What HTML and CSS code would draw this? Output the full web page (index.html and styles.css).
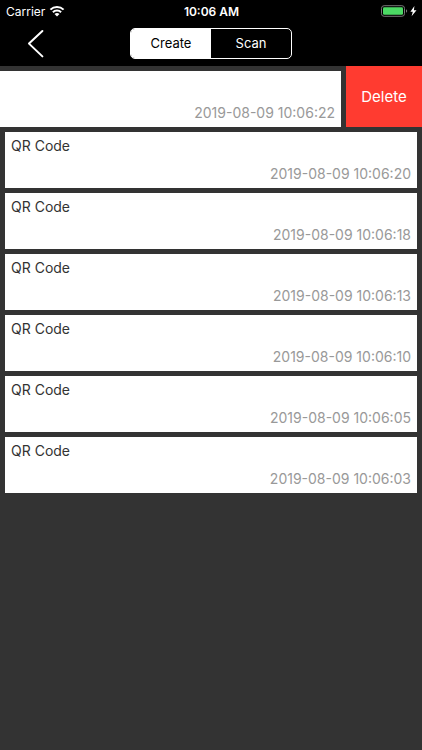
FILE: index.html
```html
<!DOCTYPE html>
<html lang="en">
<head>
<meta charset="utf-8">
<meta name="viewport" content="width=device-width, initial-scale=1">
<title>History</title>
<link rel="stylesheet" href="styles.css">
</head>
<body>
<header class="header">
  <div class="status">
    <div class="carrier">
      <span>Carrier</span>
      <svg class="wifi" viewBox="0 0 16 12" width="16" height="12" aria-hidden="true">
        <path d="M1.4 4.6a9.4 9.4 0 0 1 13.2 0M3.9 7.2a5.8 5.8 0 0 1 8.2 0" fill="none" stroke="#fff" stroke-width="2"/>
        <path d="M8 11.6 5.5 9.1a3.6 3.6 0 0 1 5 0z" fill="#fff"/>
      </svg>
    </div>
    <div class="clock">10:06 AM</div>
    <div class="power">
      <svg viewBox="0 0 37 12" width="37" height="12" aria-hidden="true">
        <rect x="1.5" y="0.7" width="23" height="10.6" rx="2.6" fill="none" stroke="#777"/>
        <rect x="3" y="2.2" width="20" height="7.6" rx="1.3" fill="#4cd964"/>
        <path d="M26 4.2v3.6q1.2-.6 1.2-1.8T26 4.2z" fill="#777"/>
        <path d="M34.4 1 30.4 6.7h2.4l-1.2 4.6 4.9-6h-2.6z" fill="#fff"/>
      </svg>
    </div>
  </div>
  <nav class="nav">
    <button class="back" type="button" aria-label="Back">
      <svg viewBox="0 0 18 30" width="18" height="30" aria-hidden="true">
        <path d="M15.4 2 2 14.6 15.4 27.4" fill="none" stroke="#fff" stroke-width="2" stroke-linecap="round" stroke-linejoin="round"/>
      </svg>
    </button>
    <div class="segments">
      <input type="radio" name="source" id="create" checked>
      <label for="create">Create</label>
      <input type="radio" name="source" id="scan">
      <label for="scan">Scan</label>
    </div>
  </nav>
</header>
<main>
  <ul class="list">
    <li class="row swiped">
      <article class="card"><time>2019-08-09 10:06:22</time></article>
      <button class="delete" type="button">Delete</button>
    </li>
    <li class="row"><article class="card"><h2>QR Code</h2><time>2019-08-09 10:06:20</time></article></li>
    <li class="row"><article class="card"><h2>QR Code</h2><time>2019-08-09 10:06:18</time></article></li>
    <li class="row"><article class="card"><h2>QR Code</h2><time>2019-08-09 10:06:13</time></article></li>
    <li class="row"><article class="card"><h2>QR Code</h2><time>2019-08-09 10:06:10</time></article></li>
    <li class="row"><article class="card"><h2>QR Code</h2><time>2019-08-09 10:06:05</time></article></li>
    <li class="row"><article class="card"><h2>QR Code</h2><time>2019-08-09 10:06:03</time></article></li>
  </ul>
</main>
</body>
</html>
```
FILE: styles.css
```css
* {
  box-sizing: border-box;
}

body {
  margin: 0;
  background: #333;
  font-family: Inter, "Liberation Sans", sans-serif;
}

button {
  margin: 0;
  padding: 0;
  border: 0;
  font: inherit;
  color: #fff;
}

.header {
  padding-bottom: 7px;
  background: #000;
  color: #fff;
}

.status {
  display: grid;
  grid-template-columns: 1fr auto 1fr;
  align-items: center;
  height: 22px;
  padding: 0 5px 0 6px;
  font-size: 12px;
}

.carrier {
  display: flex;
  align-items: center;
  gap: 4px;
}

.clock {
  font-weight: 600;
}

.power {
  display: flex;
  justify-content: flex-end;
}

.nav {
  display: grid;
  grid-template-columns: 1fr auto 1fr;
  align-items: center;
  padding-top: 6px;
}

.back {
  display: flex;
  align-items: center;
  justify-self: start;
  padding-left: 27px;
  background: none;
}

.segments {
  display: grid;
  grid-template-columns: 1fr 1fr;
  width: 162px;
  height: 31px;
  border: 1px solid #fff;
  border-radius: 5px;
  overflow: hidden;
  position: relative;
  font-size: 13px;
}

.segments input {
  position: absolute;
  opacity: 0;
}

.segments label {
  display: flex;
  align-items: center;
  justify-content: center;
  padding-bottom: 1px;
}

.segments input:checked + label {
  background: #fff;
  color: #000;
}

.list {
  margin: 0;
  padding: 0;
  list-style: none;
}

.row {
  padding: 5px 5px 0;
}

.card {
  display: flex;
  flex-direction: column;
  min-height: 56px;
  padding: 5px 6px;
  background: #fff;
}

.card h2 {
  margin: 0;
  font-size: 14px;
  font-weight: 400;
  line-height: 18px;
  color: #333;
}

.card time {
  margin-top: auto;
  align-self: flex-end;
  font-size: 14px;
  line-height: 18px;
  color: #999;
}

.swiped {
  display: flex;
  gap: 5px;
  padding: 0;
}

.swiped .card {
  flex: 1;
  margin-top: 5px;
}

.delete {
  width: 76px;
  background: #ff3b30;
  font-size: 15px;
}
```
